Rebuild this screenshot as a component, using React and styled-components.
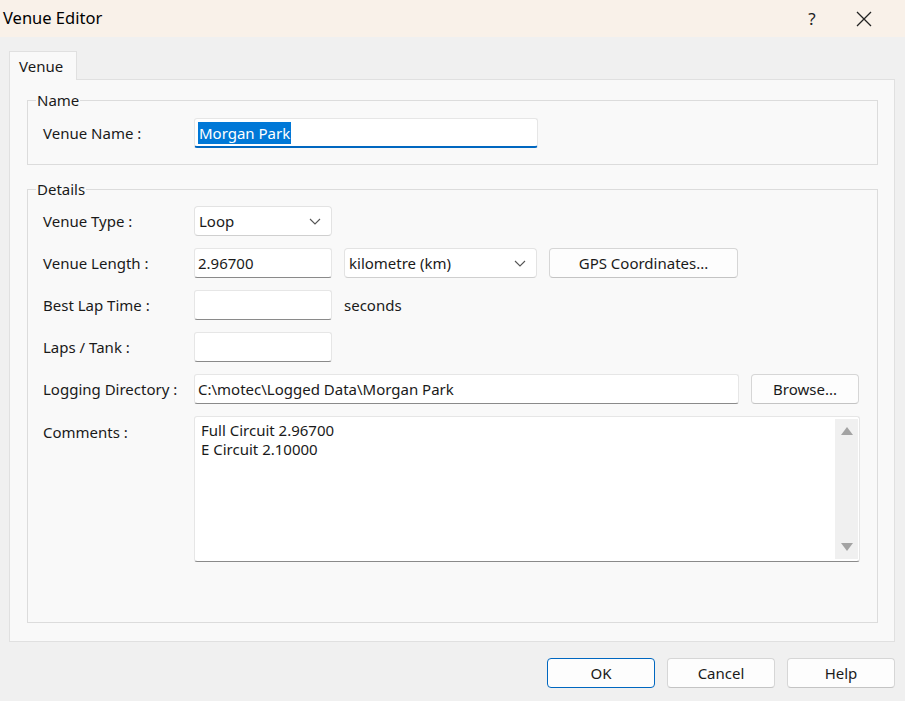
import styled, { createGlobalStyle } from 'styled-components';

const GlobalStyle = createGlobalStyle`
  html, body {
    margin: 0;
    padding: 0;
    background: #f0f0f0;
  }
  body {
    font-family: 'Noto Sans', 'Open Sans', sans-serif;
    font-size: 15px;
    color: #1a1a1a;
  }
`;

const Window = styled.div`
  width: 905px;
  height: 701px;
  display: flex;
  flex-direction: column;
  background: #f0f0f0;
  overflow: hidden;
`;

const TitleBar = styled.div`
  height: 37px;
  flex: none;
  display: flex;
  align-items: center;
  background: #f9f1e9;
  padding-left: 3px;
`;

const Title = styled.div`
  flex: 1;
  font-size: 16.5px;
  color: #000;
  padding-bottom: 2px;
`;

const TitleButton = styled.div`
  width: ${props => props.w || 46}px;
  height: 37px;
  display: flex;
  align-items: center;
  justify-content: center;
  font-size: 17px;
  color: #222;
`;

const Body = styled.div`
  flex: 1;
  display: flex;
  flex-direction: column;
  padding: 14px 10px 0 9px;
`;

const TabStrip = styled.div`
  display: flex;
  height: 29px;
  margin-bottom: -1px;
  position: relative;
  z-index: 1;
`;

const Tab = styled.div`
  width: 68px;
  box-sizing: border-box;
  padding-left: 9px;
  display: flex;
  align-items: center;
  background: #f9f9f9;
  border: 1px solid #e0e0e0;
  border-bottom: none;
`;

const TabPanel = styled.div`
  height: 563px;
  box-sizing: border-box;
  background: #f9f9f9;
  border: 1px solid #e0e0e0;
  padding: 20px 16px 0 17px;
  display: flex;
  flex-direction: column;
  gap: 24px;
`;

const Group = styled.div`
  position: relative;
  border: 1px solid #dcdcdc;
  height: ${props => props.h}px;
  box-sizing: border-box;
  padding: ${props => props.pt}px 18px 0 15px;
`;

const Legend = styled.span`
  position: absolute;
  top: -10px;
  left: 8px;
  padding: 0 1px;
  line-height: 18px;
  background: #f9f9f9;
`;

const Form = styled.div`
  display: grid;
  grid-template-columns: 151px 1fr;
  row-gap: 12px;
  align-items: center;
`;

const Label = styled.div`
  align-self: ${props => (props.top ? 'start' : 'center')};
  padding-top: ${props => (props.top ? 6 : 0)}px;
`;

const Row = styled.div`
  display: flex;
  align-items: center;
  gap: 12px;
`;

const Field = styled.div`
  width: ${props => props.w}px;
  height: 30px;
  box-sizing: border-box;
  display: flex;
  align-items: center;
  padding: 0 3px;
  background: #fff;
  border: 1px solid #e6e6e6;
  border-bottom: ${props => (props.focused ? '2px solid #0067c0' : '1px solid #8a8a8a')};
  border-radius: 3px;
  white-space: nowrap;
`;

const Selected = styled.span`
  background: #0078d7;
  color: #fff;
  padding: 1px 1px;
`;

const Combo = styled.div`
  width: ${props => props.w}px;
  height: 30px;
  box-sizing: border-box;
  display: flex;
  align-items: center;
  justify-content: space-between;
  padding: 0 10px 0 4px;
  background: #fff;
  border: 1px solid #e3e3e3;
  border-bottom-color: #cfcfcf;
  border-radius: 4px;
`;

const Button = styled.div`
  width: ${props => props.w}px;
  height: 30px;
  box-sizing: border-box;
  display: flex;
  align-items: center;
  justify-content: center;
  background: #fdfdfd;
  border: 1px solid ${props => (props.primary ? '#0067c0' : '#d6d6d6')};
  border-bottom-color: ${props => (props.primary ? '#0067c0' : '#c4c4c4')};
  border-radius: 4px;
  color: #1a1a1a;
`;

const TextArea = styled.div`
  width: 666px;
  height: 146px;
  box-sizing: border-box;
  display: flex;
  background: #fff;
  border: 1px solid #e6e6e6;
  border-bottom: 1px solid #8a8a8a;
  border-radius: 3px;
`;

const TextLines = styled.div`
  flex: 1;
  padding: 4px 6px;
  line-height: 19px;
`;

const ScrollBar = styled.div`
  width: 23px;
  margin: 2px 1px 2px 0;
  background: #f0f0f0;
  display: flex;
  flex-direction: column;
  justify-content: space-between;
  align-items: center;
  padding: 8px 0;
  box-sizing: border-box;
`;

const Footer = styled.div`
  display: flex;
  justify-content: flex-end;
  gap: 12px;
  padding-top: 16px;
`;

const Chevron = () => (
  <svg width="12" height="7" viewBox="0 0 12 7">
    <path d="M1 1l5 5 5-5" fill="none" stroke="#555" strokeWidth="1.1" />
  </svg>
);

const Arrow = ({ down }) => (
  <svg width="12" height="8" viewBox="0 0 12 8">
    <path d={down ? 'M0 0h12L6 8z' : 'M0 8h12L6 0z'} fill="#a3a3a3" />
  </svg>
);

export default function App() {
  return (
    <>
      <GlobalStyle />
      <Window>
        <TitleBar>
          <Title>Venue Editor</Title>
          <TitleButton w={46}>?</TitleButton>
          <TitleButton w={57} style={{ marginRight: 13 }}>
            <svg width="16" height="16" viewBox="0 0 16 16">
              <path d="M1 1l14 14M15 1L1 15" stroke="#222" strokeWidth="1.3" />
            </svg>
          </TitleButton>
        </TitleBar>
        <Body>
          <TabStrip>
            <Tab>Venue</Tab>
          </TabStrip>
          <TabPanel>
            <Group h={65} pt={17}>
              <Legend>Name</Legend>
              <Form>
                <Label>Venue Name :</Label>
                <Field w={344} focused>
                  <Selected>Morgan Park</Selected>
                </Field>
              </Form>
            </Group>
            <Group h={434} pt={16}>
              <Legend>Details</Legend>
              <Form>
                <Label>Venue Type :</Label>
                <Row>
                  <Combo w={138}>
                    Loop
                    <Chevron />
                  </Combo>
                </Row>
                <Label>Venue Length :</Label>
                <Row>
                  <Field w={138}>2.96700</Field>
                  <Combo w={193}>
                    kilometre (km)
                    <Chevron />
                  </Combo>
                  <Button w={189}>GPS Coordinates...</Button>
                </Row>
                <Label>Best Lap Time :</Label>
                <Row>
                  <Field w={138} />
                  <span>seconds</span>
                </Row>
                <Label>Laps / Tank :</Label>
                <Row>
                  <Field w={138} />
                </Row>
                <Label>Logging Directory :</Label>
                <Row>
                  <Field w={545}>C:\motec\Logged Data\Morgan Park</Field>
                  <Button w={108}>Browse...</Button>
                </Row>
                <Label top>Comments :</Label>
                <Row>
                  <TextArea>
                    <TextLines>
                      <div>Full Circuit 2.96700</div>
                      <div>E Circuit 2.10000</div>
                    </TextLines>
                    <ScrollBar>
                      <Arrow />
                      <Arrow down />
                    </ScrollBar>
                  </TextArea>
                </Row>
              </Form>
            </Group>
          </TabPanel>
          <Footer>
            <Button w={108} primary>OK</Button>
            <Button w={108}>Cancel</Button>
            <Button w={108}>Help</Button>
          </Footer>
        </Body>
      </Window>
    </>
  );
}
